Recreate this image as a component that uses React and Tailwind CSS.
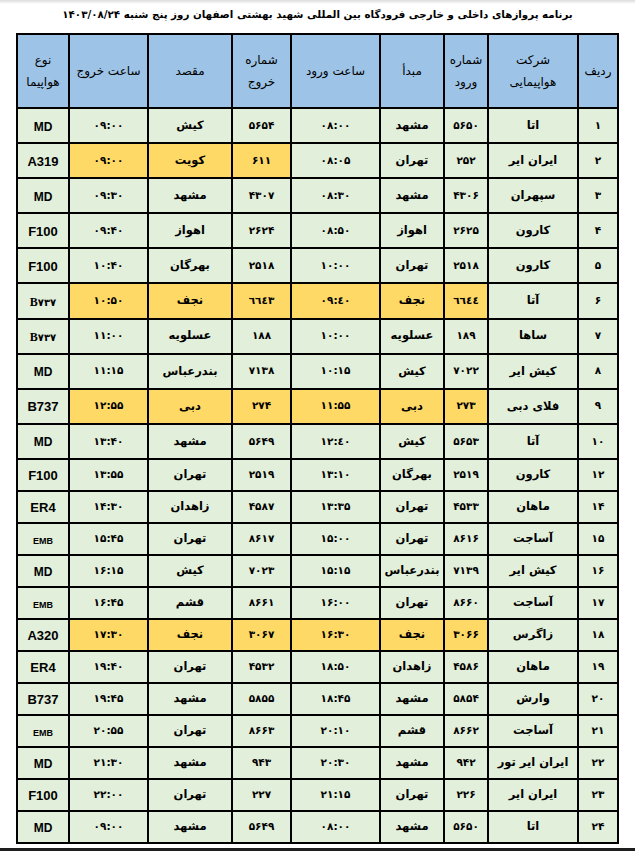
const rows = [
  ['۱', 'اتا', '۵۶۵۰', 'مشهد', '۰۸:۰۰', '۵۶۵۴', 'کیش', '۰۹:۰۰', 'MD', '', 'a'],
  ['۲', 'ایران ایر', '۲۵۲', 'تهران', '۰۸:۰۵', '۶۱۱', 'کویت', '۰۹:۰۰', 'A319', 'out', 'a'],
  ['۳', 'سپهران', '۴۳۰۶', 'مشهد', '۰۸:۳۰', '۴۳۰۷', 'مشهد', '۰۹:۳۰', 'MD', '', 'a'],
  ['۴', 'کارون', '۲۶۲۵', 'اهواز', '۰۸:۵۰', '۲۶۲۴', 'اهواز', '۰۹:۴۰', 'F100', '', 'a'],
  ['۵', 'کارون', '۲۵۱۸', 'تهران', '۱۰:۰۰', '۲۵۱۸', 'بهرگان', '۱۰:۴۰', 'F100', '', 'a'],
  ['۶', 'آتا', '٦٦٤٤', 'نجف', '۰۹:٤۰', '٦٦٤٣', 'نجف', '۱۰:۵۰', 'B۷۳۷', 'all', 'a'],
  ['۷', 'ساها', '۱۸۹', 'عسلویه', '۱۰:۰۰', '۱۸۸', 'عسلویه', '۱۱:۰۰', 'B۷۳۷', '', 'a'],
  ['۸', 'کیش ایر', '۷۰۲۲', 'کیش', '۱۰:۱۵', '۷۱۳۸', 'بندرعباس', '۱۱:۱۵', 'MD', '', 'a'],
  ['۹', 'فلای دبی', '۲۷۳', 'دبی', '۱۱:۵۵', '۲۷۴', 'دبی', '۱۲:۵۵', 'B737', 'all', 'a'],
  ['۱۰', 'آتا', '۵۶۵۳', 'کیش', '۱۲:٤۰', '۵۶۴۹', 'مشهد', '۱۳:۴۰', 'MD', '', 'a'],
  ['۱۲', 'کارون', '۲۵۱۹', 'بهرگان', '۱۳:۱۰', '۲۵۱۹', 'تهران', '۱۳:۵۵', 'F100', '', 'b'],
  ['۱۴', 'ماهان', '۴۵۳۳', 'تهران', '۱۳:۳۵', '۴۵۸۷', 'زاهدان', '۱۴:۳۰', 'ER4', '', 'b'],
  ['۱۵', 'آساجت', '۸۶۱۶', 'تهران', '۱۵:۰۰', '۸۶۱۷', 'تهران', '۱۵:۴۵', 'EMB', '', 'b'],
  ['۱۶', 'کیش ایر', '۷۱۳۹', 'بندرعباس', '۱۵:۱۵', '۷۰۲۳', 'کیش', '۱۶:۱۵', 'MD', '', 'b'],
  ['۱۷', 'آساجت', '۸۶۶۰', 'تهران', '۱۶:۰۰', '۸۶۶۱', 'قشم', '۱۶:۴۵', 'EMB', '', 'b'],
  ['۱۸', 'زاگرس', '۳۰۶۶', 'نجف', '۱۶:۳۰', '۳۰۶۷', 'نجف', '۱۷:۳۰', 'A320', 'all', 'b'],
  ['۱۹', 'ماهان', '۴۵۸۶', 'زاهدان', '۱۸:۵۰', '۴۵۳۲', 'تهران', '۱۹:۴۰', 'ER4', '', 'b'],
  ['۲۰', 'وارش', '۵۸۵۴', 'مشهد', '۱۸:۴۵', '۵۸۵۵', 'مشهد', '۱۹:۴۵', 'B737', '', 'b'],
  ['۲۱', 'آساجت', '۸۶۶۲', 'قشم', '۲۰:۱۰', '۸۶۶۳', 'تهران', '۲۰:۵۵', 'EMB', '', 'b'],
  ['۲۲', 'ایران ایر تور', '۹۴۲', 'مشهد', '۲۰:۳۰', '۹۴۳', 'مشهد', '۲۱:۳۰', 'MD', '', 'b'],
  ['۲۳', 'ایران ایر', '۲۲۶', 'تهران', '۲۱:۱۵', '۲۲۷', 'تهران', '۲۲:۰۰', 'F100', '', 'b'],
  ['۲۴', 'اتا', '۵۶۵۰', 'مشهد', '۰۸:۰۰', '۵۶۴۹', 'مشهد', '۰۹:۰۰', 'MD', '', 'b'],
];

const fa = { fontFamily: '"DejaVu Sans", sans-serif' };

function cellBg(hl, col) {
  if (hl === 'out' && col >= 5 && col <= 7) return 'bg-[#ffd966]';
  if (hl === 'all' && col >= 2 && col <= 7) return 'bg-[#ffd966]';
  return 'bg-[#e2efda]';
}

function TypeCell({ t }) {
  if (t === 'EMB') {
    return <span className="text-[9px] font-bold font-['Liberation_Sans',sans-serif]">EMB</span>;
  }
  if (t === 'MD') {
    return <span className="text-[12px] font-bold font-['Liberation_Sans',sans-serif]">MD</span>;
  }
  if (t.startsWith('B۷')) {
    return (
      <span dir="ltr" className="text-[12px] font-bold">
        <span className="font-['Liberation_Serif',serif]">B</span>
        <span className="font-['DejaVu_Sans',sans-serif] text-[10px]">۷۳۷</span>
      </span>
    );
  }
  return <span className="text-[13px] font-bold font-['Liberation_Sans',sans-serif]">{t}</span>;
}

function HeadCell({ lines }) {
  return (
    <th className="border-2 border-black bg-[#9dc3e6] font-normal text-[12px] leading-[22px] text-black align-middle">
      {lines.map((l, i) => (
        <div key={i}>{l}</div>
      ))}
    </th>
  );
}

export default function App() {
  return (
    <div className="w-[635px] h-[851px] bg-white flex flex-col overflow-hidden" style={fa}>
      <div className="h-[4px] bg-gradient-to-b from-[#dcdcdc] to-white" />
      <div dir="rtl" className="h-[29px] flex justify-center items-start pt-[3px] text-[10.3px] font-bold text-black whitespace-nowrap">
        برنامه پروازهای داخلی و خارجی فرودگاه بین المللی شهید بهشتی اصفهان روز پنج شنبه ۱۴۰۳/۰۸/۲۴
      </div>
      <div className="pl-[16px]">
        <table dir="rtl" className="w-[601px] table-fixed border-collapse text-center">
          <colgroup>
            <col className="w-[40px]" />
            <col className="w-[90px]" />
            <col className="w-[44px]" />
            <col className="w-[64px]" />
            <col className="w-[89px]" />
            <col className="w-[59px]" />
            <col className="w-[84px]" />
            <col className="w-[79px]" />
            <col className="w-[52px]" />
          </colgroup>
          <thead>
            <tr className="h-[74px]">
              <HeadCell lines={['ردیف']} />
              <HeadCell lines={['شرکت', 'هواپیمایی']} />
              <HeadCell lines={['شماره', 'ورود']} />
              <HeadCell lines={['مبدأ']} />
              <HeadCell lines={['ساعت ورود']} />
              <HeadCell lines={['شماره', 'خروج']} />
              <HeadCell lines={['مقصد']} />
              <HeadCell lines={['ساعت خروج']} />
              <HeadCell lines={['نوع', 'هواپیما']} />
            </tr>
          </thead>
          <tbody>
            {rows.map((r) => (
              <tr key={r[0]} className={r[10] === 'a' ? 'h-[35.1px]' : 'h-[32px]'}>
                {r.slice(0, 8).map((v, i) => {
                  const isNum = i === 0 || i === 2 || i === 4 || i === 5 || i === 7;
                  return (
                    <td
                      key={i}
                      className={`border-2 border-black p-0 align-middle text-black ${cellBg(r[9], i)} ${
                        isNum ? 'text-[10.5px] font-bold' : 'text-[11.5px] font-bold'
                      }`}
                    >
                      {i === 4 || i === 7 ? <span dir="ltr">{v}</span> : v}
                    </td>
                  );
                })}
                <td className="border-2 border-black p-0 align-middle bg-[#e2efda] text-black">
                  <TypeCell t={r[8]} />
                </td>
              </tr>
            ))}
          </tbody>
        </table>
      </div>
      <div className="flex-1" />
      <div className="h-[3px] bg-[#1e1e1e]" />
    </div>
  );
}
